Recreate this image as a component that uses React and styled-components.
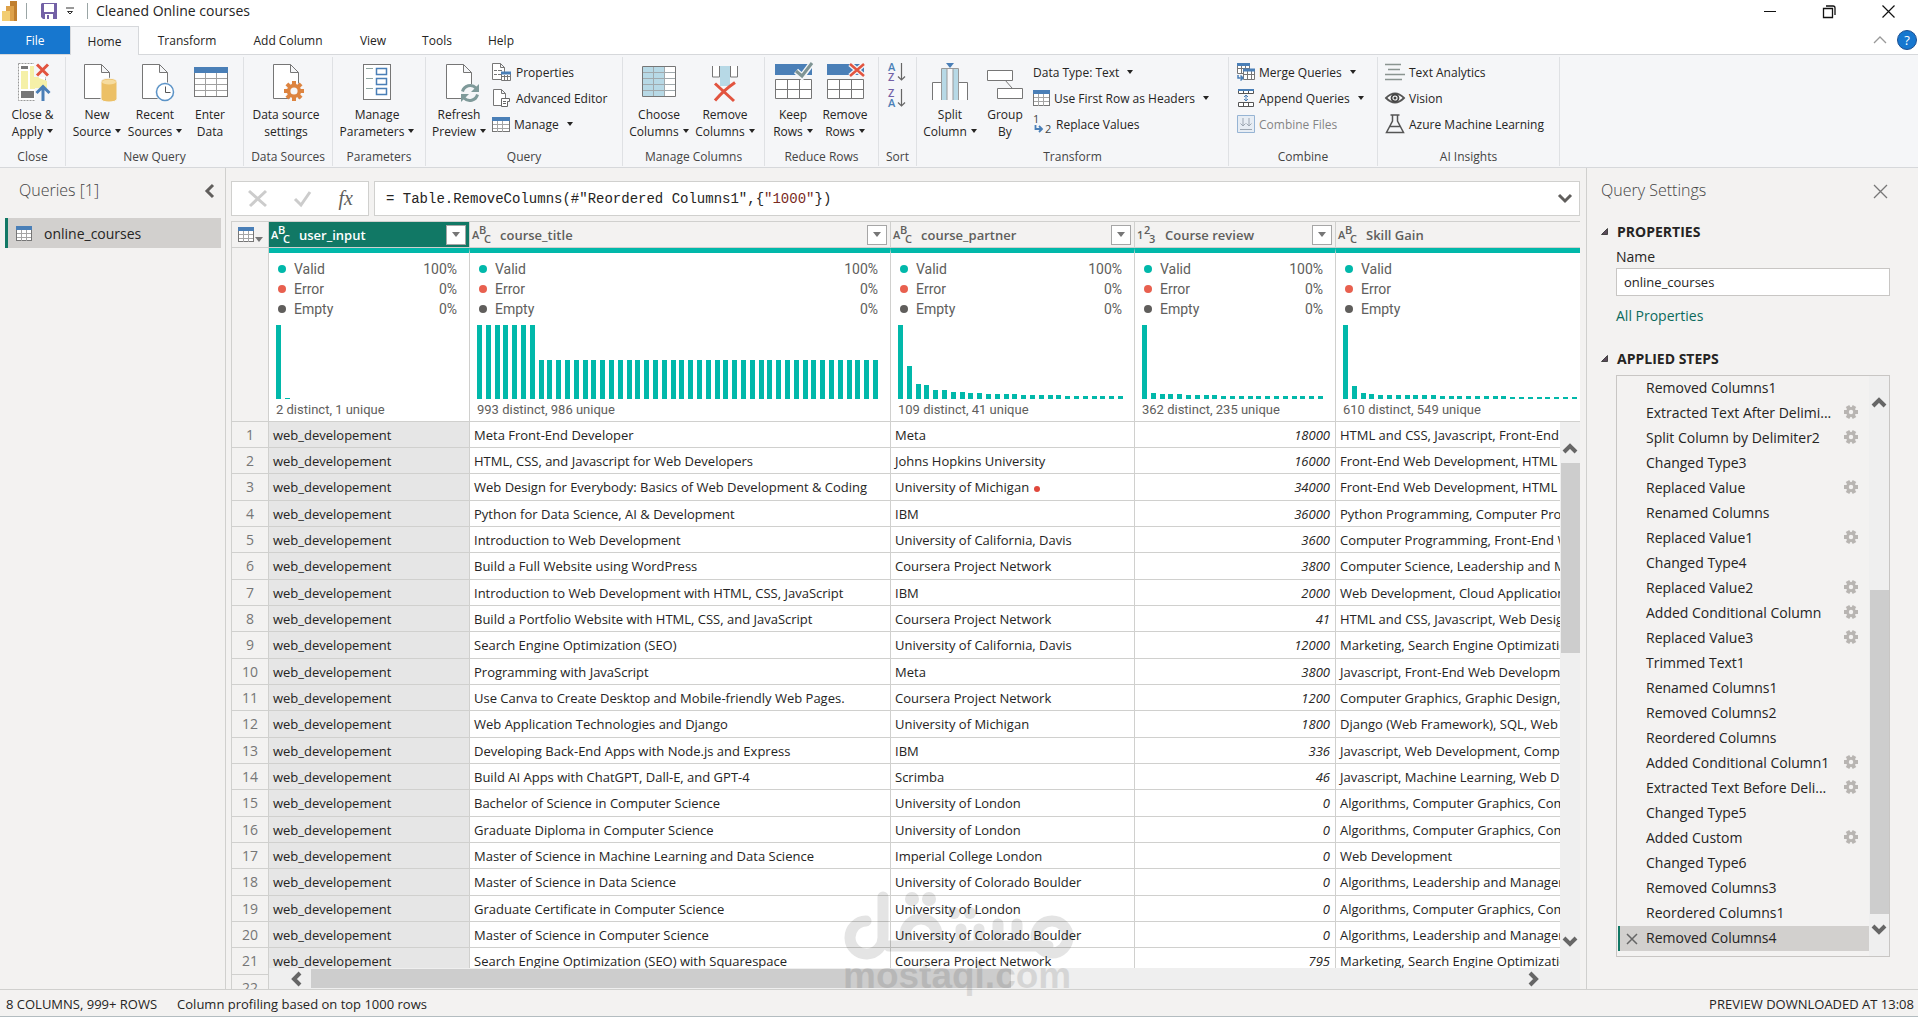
import React from "react"
import styled, { createGlobalStyle, css } from "styled-components"

const theme = {
    ui: `"Open Sans", "Noto Sans", sans-serif`,
    din: `Roboto, "Liberation Sans", sans-serif`,
    mono: `"Liberation Mono", monospace`,
    chrome: "#f3f2f1",
    ribbon: "#f5f6f8",
    line: "#d0d0ce",
    text: "#252423",
    muted: "#605e5c",
    green: "#117865",
    teal: "#01b8aa",
    blue: "#4a7fb7",
    grey: "#767676"
}

const GlobalStyle = createGlobalStyle`
    *{
        box-sizing: border-box;
    }
    body{
        margin: 0;
        background: ${theme.chrome};
        color: ${theme.text};
        font-family: ${theme.ui};
        font-size: 12px;
    }
    button, input{
        font: inherit;
        color: inherit;
    }
    button{
        border: 0;
        padding: 0;
        background: none;
    }
    svg{
        display: block;
        flex: none;
        overflow: visible;
    }
`

const Shell = styled.div`
    position: relative;
    display: flex;
    flex-direction: column;
    height: 100vh;
    overflow: hidden;
`

/* Title bar */

const TitleBar = styled.header`
    display: flex;
    align-items: center;
    height: 26px;
    padding: 0 23px 4px 2px;
    background: #fff;
`

const Divider = styled.span`
    width: 1px;
    height: 16px;
    margin: 0 8px;
    background: #9aa5a5;
`

const SaveButton = styled.button`
    margin: 0 9px 0 6px;
`

const CustomizeButton = styled.button`
    padding-right: 5px;
`

const DocTitle = styled.h1`
    flex: 1;
    margin: 0;
    font-size: 14px;
    font-weight: 400;
    line-height: 18px;
`

const WindowButtons = styled.div`
    display: flex;
    gap: 46px;
`

/* Ribbon tabs */

const TabRow = styled.nav`
    display: flex;
    height: 29px;
    padding-right: 1px;
    background: #fff;
    border-bottom: 1px solid #d6d8db;
`

const Tab = styled.button`
    width: ${props => props.$width}px;
    height: 28px;
    ${props => props.$kind === "file" && css`
        background: #1777cf;
        color: #fff;
    `}
    ${props => props.$kind === "active" && css`
        height: 29px;
        background: ${theme.ribbon};
        border: 1px solid #d6d8db;
        border-bottom: 0;
    `}
`

const TabTools = styled.div`
    display: flex;
    align-items: center;
    gap: 10px;
    margin-left: auto;
`

const Help = styled.button`
    width: 20px;
    height: 20px;
    border-radius: 50%;
    background: #1777cf;
    border: 1px solid #1d4f91;
    color: #fff;
    font-size: 13px;
    line-height: 18px;
`

/* Ribbon */

const Ribbon = styled.div`
    display: flex;
    height: 113px;
    padding: 2px 0 1px;
    background: ${theme.ribbon};
    border-bottom: 1px solid #d6d8db;
`

const Group = styled.section`
    display: flex;
    flex: none;
    flex-direction: column;
    justify-content: space-between;
    width: ${props => props.$width}px;
    padding-top: 5px;
    border-right: 1px solid #dfe1e4;
`

const GroupBody = styled.div`
    display: flex;
    padding-left: ${props => props.$inset || 0}px;
`

const GroupLabel = styled.span`
    line-height: 18px;
    text-align: center;
    color: #444;
`

const BigButton = styled.button`
    display: flex;
    flex-direction: column;
    align-items: center;
    width: ${props => props.$width}px;
    line-height: 17px;
    white-space: nowrap;
    svg:first-child{
        margin-bottom: 4px;
    }
`

const SmallStack = styled.div`
    display: flex;
    flex-direction: column;
    padding-left: ${props => props.$inset || 0}px;
`

const SmallButton = styled.button`
    display: flex;
    align-items: center;
    gap: 4px;
    height: 26px;
    padding-bottom: 6px;
    white-space: nowrap;
    opacity: ${props => props.disabled ? 0.55 : 1};
`

const SortStack = styled.div`
    display: flex;
    flex-direction: column;
    gap: 6px;
`

const CaretMark = styled.span`
    display: inline-block;
    margin-left: 4px;
    vertical-align: 3px;
    border: 3px solid transparent;
    border-top: 4px solid #252423;
    border-bottom: 0;
`

/* Panes */

const Workspace = styled.div`
    display: flex;
    flex: 1;
    min-height: 0;
`

const PaneHeader = styled.div`
    display: flex;
    align-items: center;
    justify-content: space-between;
    height: 46px;
`

const PaneTitle = styled.h2`
    margin: 0;
    padding-bottom: 2px;
    font-size: 16px;
    font-weight: 300;
    color: #444;
`

const QueriesPane = styled.aside`
    flex: none;
    width: 226px;
    border-right: 1px solid ${theme.line};
    ${PaneHeader}{
        padding: 0 10px 0 19px;
    }
`

const QueryItem = styled.button`
    display: flex;
    align-items: center;
    gap: 12px;
    width: 216px;
    height: 30px;
    margin: 4px 0 0 5px;
    padding-left: 8px;
    border-left: 3px solid ${theme.green};
    background: #d2d0ce;
    font-size: 14px;
`

const Main = styled.main`
    display: flex;
    flex: 1;
    flex-direction: column;
    min-width: 0;
    padding: 13px 6px 0 5px;
`

const FormulaBar = styled.div`
    display: flex;
    gap: 5px;
    height: 35px;
    margin-bottom: 5px;
`

const FormulaTools = styled.div`
    display: flex;
    align-items: center;
    justify-content: space-between;
    width: 138px;
    padding: 0 15px 0 16px;
    background: #fff;
    border: 1px solid ${theme.line};
`

const FxButton = styled.button`
    font-family: "Liberation Serif", serif;
    font-size: 20px;
    font-style: italic;
    color: ${theme.muted};
`

const FormulaBox = styled.div`
    display: flex;
    flex: 1;
    align-items: center;
    justify-content: space-between;
    padding: 0 7px 0 11px;
    background: #fff;
    border: 1px solid ${theme.line};
`

const FormulaText = styled.div`
    flex: 1;
    font-family: ${theme.mono};
    font-size: 14px;
    white-space: pre;
    outline: 0;
    em{
        font-style: normal;
        color: #7a2b1e;
    }
`

/* Data grid */

const GridArea = styled.div`
    position: relative;
    flex: 1;
    min-height: 0;
    overflow: hidden;
    border-top: 1px solid ${theme.line};
    border-left: 1px solid ${theme.line};
`

const Table = styled.table`
    width: 100%;
    table-layout: fixed;
    border-collapse: separate;
    border-spacing: 0;
    th, td{
        padding: 0;
        overflow: hidden;
        white-space: nowrap;
        text-align: left;
        font-weight: 400;
        border-right: 1px solid ${theme.line};
        border-bottom: 1px solid ${theme.line};
    }
    th:last-child, td:last-child{
        border-right: 0;
    }
`

const HeadCell = styled.th`
    height: 26px;
    color: ${props => props.$selected ? "#fff" : theme.muted};
    background: ${props => props.$selected ? theme.green : theme.chrome};
`

const HeadInner = styled.div`
    display: flex;
    align-items: center;
    gap: 8px;
    padding: 0 3px 0 2px;
    font-size: 13px;
    strong{
        flex: 1;
        font-weight: 600;
    }
`

const FilterButton = styled.button`
    display: grid;
    place-items: center;
    width: 20px;
    height: 20px;
    background: #fff;
    border: 1px solid #a6a6a6;
    color: ${theme.grey};
`

const CornerCell = styled.th`
    background: ${theme.chrome};
    button{
        display: flex;
        align-items: flex-end;
        gap: 1px;
        margin-left: 6px;
    }
`

const ProfileCell = styled.td`
    height: 174px;
    vertical-align: top;
    background: #fff;
    border-top: 5px solid ${theme.teal};
    font-family: ${theme.din};
    font-size: 13px;
    color: ${theme.muted};
`

const BlankCell = styled.td`
    background: ${theme.chrome};
`

const Quality = styled.ul`
    margin: 0;
    padding: 6px 12px 6px 9px;
    list-style: none;
    li{
        display: flex;
        align-items: center;
        gap: 8px;
        height: 20px;
        font-size: 14px;
    }
`

const Share = styled.span`
    margin-left: auto;
`

const Dot = styled.i`
    width: 8px;
    height: 8px;
    border-radius: 50%;
    background: ${props => props.$color};
`

const Distribution = styled.div`
    padding-left: 7px;
    line-height: 22px;
`

const Row = styled.tr`
    td, th{
        height: 26px;
        line-height: 18px;
    }
    &:nth-child(3n) td, &:nth-child(3n) th{
        height: 27px;
    }
`

const RowNumber = styled.th`
    background: ${theme.chrome};
    color: ${theme.grey};
    font-size: 14px;
    && {
        text-align: center;
    }
`

const Cell = styled.td`
    background: ${props => props.$selected ? "#e6e6e6" : "#fff"};
    font-size: 13px;
    && {
        padding: ${props => props.$number ? "0 5px 0 0" : "0 0 0 4px"};
        text-align: ${props => props.$number ? "right" : "left"};
        font-style: ${props => props.$number ? "italic" : "normal"};
    }
`

const RedDot = styled.span`
    display: inline-block;
    width: 6px;
    height: 6px;
    margin-left: 5px;
    border-radius: 50%;
    background: #e0483c;
`

/* Scroll bars lie over the last rows and the last column */

const VerticalBar = styled.div`
    position: absolute;
    top: 200px;
    right: 0;
    bottom: 21px;
    display: flex;
    flex-direction: column;
    align-items: center;
    width: 20px;
    padding: 21px 0;
    background: #efefef;
`

const VerticalThumb = styled.div`
    width: 19px;
    height: 190px;
    margin: 9px 0 auto;
    background: #cdcdcd;
`

const HorizontalBar = styled.div`
    position: absolute;
    left: 37px;
    right: 0;
    bottom: 0;
    display: flex;
    align-items: center;
    height: 21px;
    padding: 0 40px 0 21px;
    background: #efefef;
`

const HorizontalThumb = styled.div`
    width: 56%;
    height: 19px;
    margin: 0 auto 0 9px;
    background: #cdcdcd;
`

/* Query settings */

const Settings = styled.aside`
    flex: none;
    width: 332px;
    padding: 0 28px 0 14px;
    border-left: 1px solid ${theme.line};
    ${PaneHeader}{
        padding-right: 2px;
    }
`

const SectionTitle = styled.h3`
    display: flex;
    align-items: center;
    gap: 9px;
    height: 34px;
    margin: 0;
    font-size: 14px;
    font-weight: 700;
`

const SectionBody = styled.div`
    display: flex;
    flex-direction: column;
    margin-left: 15px;
    font-size: 14px;
`

const NameLabel = styled.label`
    line-height: 18px;
`

const NameInput = styled.input`
    height: 28px;
    margin: 2px 0 10px;
    padding: 0 7px;
    background: #fff;
    border: 1px solid #c8c6c4;
    font-size: 13px;
`

const PropertiesLink = styled.a`
    margin-bottom: 15px;
    line-height: 20px;
    color: #0b6a5c;
    text-decoration: none;
`

const StepsBox = styled.div`
    display: flex;
    height: 582px;
    border: 1px solid #c8c6c4;
`

const StepList = styled.ol`
    flex: 1;
    min-width: 0;
    margin: 0;
    padding: 0 0 0 1px;
    list-style: none;
`

const Step = styled.li`
    display: flex;
    align-items: center;
    height: 25px;
    padding: 0 11px 0 ${props => props.$selected ? 6 : 28}px;
    background: ${props => props.$selected ? "#d2d0ce" : "none"};
    border-left: ${props => props.$selected ? `2px solid ${theme.green}` : "0"};
`

const StepName = styled.button`
    line-height: 20px;
    padding-bottom: 2px;
    white-space: nowrap;
`

const StepDelete = styled.span`
    margin-right: 8px;
`

const StepGear = styled.button`
    margin-left: auto;
    padding-bottom: 4px;
`

const StepBar = styled.div`
    display: flex;
    flex-direction: column;
    align-items: center;
    width: 20px;
    padding: 21px 0;
    background: #efefef;
`

const StepThumb = styled.div`
    flex: 1;
    width: 19px;
    margin: 182px 0 10px;
    background: #cdcdcd;
`

const StatusBar = styled.footer`
    display: flex;
    gap: 20px;
    height: 28px;
    padding: 0 4px 0 6px;
    border-top: 1px solid ${theme.line};
    border-bottom: 1px solid #b3bcc0;
    font-size: 13px;
    line-height: 28px;
    span:last-child{
        margin-left: auto;
    }
`

const Watermark = styled.svg`
    position: absolute;
    left: 50%;
    bottom: 17px;
    margin-left: -116px;
    opacity: 0.1;
    pointer-events: none;
`

/* Icons */

const Big = ({ children }) =>
    <svg width="40" height="40" viewBox="0 0 40 40" fill="none" aria-hidden="true">{children}</svg>

const Small = ({ children, width = 18, height = 18 }) =>
    <svg width={width} height={height} viewBox={`0 0 ${width} ${height}`} fill="none" aria-hidden="true">{children}</svg>

const Page = () =>
    <path d="M7.5 2.5h17l8 8v26h-25zM24.5 2.5v8h8" fill="#fff" stroke={theme.grey} />

const Cross = ({ d, width = 3 }) =>
    <path d={d} stroke="#e2543f" strokeWidth={width} />

const GearShape = ({ cx, cy, r, color }) =>
    <g transform={`translate(${cx} ${cy})`} fill={color}>
        {[0, 45, 90, 135].map(a =>
            <rect key={a} x={-r / 5} y={-r} width={r / 2.5} height={r * 2} transform={`rotate(${a})`} />
        )}
        <circle r={r * 0.72} />
        <circle r={r * 0.36} fill="#f5f6f8" />
    </g>

/* Six broad teeth, for the step list */
const StepGearIcon = () =>
    <Small width={14} height={14}>
        <g transform="translate(7 7)" fill="#b8b5b2">
            {[30, 90, 150].map(a =>
                <rect key={a} x="-2" y="-7" width="4" height="14" transform={`rotate(${a})`} />
            )}
            <circle r="5" />
            <circle r="2.2" fill={theme.chrome} />
        </g>
    </Small>

const Chevron = ({ d, width = 14, height = 10, stroke = 3, color = "#666" }) =>
    <Small width={width} height={height}>
        <path d={d} stroke={color} strokeWidth={stroke} />
    </Small>

const UpMark = () => <Chevron d="M1 9l6-6 6 6" height={11} stroke={4} />
const DownMark = () => <Chevron d="M1 2l6 6 6-6" height={11} stroke={4} />

const SectionMark = () =>
    <Small width={7} height={7}>
        <path d="M6.5.5v6h-6z" fill="#5a4a5a" stroke="#444" />
    </Small>

const GridIcon = ({ width = 16, height = 15 }) =>
    <Small width={width} height={height}>
        <rect x="0.5" y="0.5" width={width - 1} height={height - 1} fill="#fff" stroke={theme.grey} />
        <path d={`M5.5 4v${height - 4}M10.5 4v${height - 4}M1 7.5h${width - 2}M1 11.5h${width - 2}`} stroke="#a5a5a5" />
        <path d={`M0 2h${width}`} stroke={theme.blue} strokeWidth="4" />
    </Small>

const CloseApplyIcon = () =>
    <Big>
        <rect x="5.5" y="1.5" width="27" height="37" fill="#fff" stroke="#999" strokeDasharray="2 1" />
        <path d="M8 5.5h7" stroke="#777" strokeWidth="3" />
        <rect x="8" y="29" width="13" height="7" fill="#777" />
        <rect x="8" y="9" width="7" height="18" fill="#f5f0a8" />
        <path d="M17 4h5l4 12 8 3v8H17z" fill="#f5f0a8" />
        <path d="M21 1h17v14H21z" fill="#f5f6f8" />
        <Cross d="M24 2.5l11 11M35 2.5l-11 11" />
        <path d="M22 26h15v13H22z" fill="#f5f6f8" />
        <path d="M30 39V25M23.5 31l6.5-6.5 6.5 6.5" stroke={theme.blue} strokeWidth="3" />
    </Big>

const NewSourceIcon = () =>
    <Big>
        <Page />
        <path d="M24 20c0-5 16-5 16 0v17c0 4-16 4-16 0z" fill="#ecc066" stroke="#f5f6f8" />
        <ellipse cx="32" cy="20" rx="7" ry="2.5" fill="#f6dc9f" />
    </Big>

const RecentIcon = () =>
    <Big>
        <Page />
        <circle cx="30" cy="30" r="10" fill="#f5f6f8" />
        <circle cx="30" cy="30" r="8.5" fill="#fff" stroke="#5b93c7" strokeWidth="1.5" />
        <path d="M30.500 24.500v6h5" stroke="#555" />
    </Big>

const EnterDataIcon = () =>
    <Big>
        <rect x="4.5" y="5.5" width="33" height="29" fill="#fff" stroke={theme.grey} />
        <path d="M15.5 11v23M26.5 11v23M5 16.5h32M5 22.5h32M5 28.5h32" stroke="#a0a0a0" />
        <path d="M4 8h34" stroke={theme.blue} strokeWidth="6" />
    </Big>

const DataSourceIcon = () =>
    <Big>
        <Page />
        <circle cx="28" cy="29" r="9" fill="#f5f6f8" />
        <GearShape cx={28} cy={29} r={10} color="#dd8440" />
    </Big>

const ParametersIcon = () =>
    <Big>
        <rect x="6.5" y="2.5" width="27" height="35" fill="#fff" stroke={theme.grey} />
        <path d="M9 6.5h7M9 16.5h7M9 26.5h7" stroke="#8fa5a0" />
        <path d="M19.5 6.5h10v6h-10zM19.5 16.5h10v6h-10zM19.5 26.5h10v6h-10z" stroke={theme.blue} strokeWidth="1.5" />
    </Big>

const RefreshIcon = () =>
    <Big>
        <Page />
        <circle cx="31" cy="31" r="9" fill="#f5f6f8" />
        <path d="M23.5 29.5a8 8 0 0 1 13.5-3.5M38.5 32.5a8 8 0 0 1-13.5 3.5" stroke="#7f9a9a" strokeWidth="3" />
        <path d="M40 22v8h-8zM22 40v-8h8z" fill="#7f9a9a" />
    </Big>

const ChooseColumnsIcon = () =>
    <Big>
        <path d="M3.5 4.5h33v30h-33z" fill="#fff" />
        <path d="M4 5h22v29H4z" fill="#b7d9e6" />
        <path d="M14.5 5v29M25.5 5v29M4 10.5h32M4 16.5h32M4 22.5h32M4 28.5h32" stroke="#a0a9ad" />
        <path d="M3.5 4.5h33v30h-33z" stroke={theme.grey} />
    </Big>

const RemoveColumnsIcon = () =>
    <Big>
        <path d="M7.5 4v11h7V4M25.5 4v11h7V4" fill="#fff" stroke={theme.grey} />
        <path d="M15 4h10v20H15z" fill="#b7d9e6" />
        <Cross d="M10 21.5L29 39M30 20.5Q19 28 10 38.5" />
    </Big>

const RowsBase = () =>
    <>
        <path d="M2 2h37v11H2z" fill={theme.blue} />
        <path d="M2.5 17.5h36v19h-36zM14.5 17v19M26.5 17v19M3 27.5h35" fill="#fff" stroke={theme.grey} />
    </>

const KeepRowsIcon = () =>
    <Big>
        <RowsBase />
        <path d="M23 9l6 5.5L39 1" stroke="#f5f6f8" strokeWidth="6" />
        <path d="M23 9l6 5L39 1" stroke="#7f9494" strokeWidth="3" />
    </Big>

const RemoveRowsIcon = () =>
    <Big>
        <RowsBase />
        <path d="M25 2l14 12M39 2L25 14" stroke="#f5f6f8" strokeWidth="5" />
        <Cross d="M25 2l14 12M39 2L25 14" width={2.5} />
    </Big>

const SplitIcon = () =>
    <Big>
        <path d="M2.5 38V20.5h9V38M28.5 38V20.5h9V38" fill="#fff" stroke={theme.grey} />
        <path d="M12 7h5v31h-5zM23 7h5v31h-5z" fill="#b7d9e6" />
        <path d="M11.5 38V6.5h5.5M28.5 38V6.5H23M17 38V6.5h6V38" stroke="#999" />
        <path d="M16 1h8l-4 5z" fill={theme.blue} />
    </Big>

const GroupByIcon = () =>
    <Big>
        <path d="M20 18l7 8" stroke={theme.grey} />
        <path d="M2.5 8.5h25v10h-25zM12.5 26.5h25v10h-25z" fill="#fff" stroke={theme.grey} />
    </Big>

const PropertiesIcon = () =>
    <Small width={20}>
        <path d="M.5.5h8l4 4v12H.5zM8.5.5v4h4" fill="#fff" stroke={theme.grey} />
        <path d="M2 7.5h3M2 11.5h3M6 7.5h4M6 11.5h4" stroke={theme.grey} />
        <path d="M9.5 9.5h9v8h-9zM9 13.5h10M12.5 12v5M15.5 12v5" fill="#fff" stroke={theme.grey} />
        <path d="M9 10h10" stroke={theme.blue} strokeWidth="3" />
    </Small>

const EditorIcon = () =>
    <Small width={20}>
        <path d="M1.5.5h8l4 4v12h-12zM9.5.5v4h4" fill="#fff" stroke={theme.grey} />
        <path d="M9.5 9.5h8v3h-2v5h-6z" fill="#fff" stroke="#666" />
        <path d="M11 12.5h3M11 14.5h3" stroke="#666" />
    </Small>

const SortIcon = ({ top, bottom, topColor, bottomColor }) =>
    <svg width="19" height="20" viewBox="0 0 19 20" fill="none" fontFamily="Open Sans" fontSize="11" fontWeight="600">
        <text x="0" y="9" fill={topColor}>{top}</text>
        <text x="0" y="19" fill={bottomColor}>{bottom}</text>
        <path d="M13.5 1v17M10 14.5l3.5 3.5 3.5-3.5" stroke="#666" strokeWidth="1.2" />
    </svg>

const ReplaceIcon = () =>
    <svg width="19" height="20" viewBox="0 0 19 20" fill="none" fontFamily="Open Sans" fontSize="11">
        <text x="0" y="9" fill="#444">1</text>
        <text x="12" y="19" fill="#444">2</text>
        <path d="M2.5 11v4h6M6 12l3 3-3 3" stroke={theme.blue} strokeWidth="1.8" />
    </svg>

const MergeIcon = () =>
    <Small>
        <path d="M.5.5h12v10H.5zM.5 5.5h12M4.5 2v8M8.5 2v8" fill="#fff" stroke={theme.grey} />
        <path d="M0 1.5h13" stroke={theme.blue} strokeWidth="3" />
        <path d="M6.5 6.5h11v10h-11zM7 11.5h11M10.5 8v8M14.5 8v8" fill="#fff" stroke={theme.grey} />
        <path d="M6 7h12" stroke={theme.blue} strokeWidth="3" />
        <path d="M1 12v3h4M3.5 12.5L6 15l-2.5 2.5" stroke={theme.blue} strokeWidth="1.5" />
    </Small>

const AppendIcon = () =>
    <Small>
        <path d="M1.5.5h15v4h-15zM6.5 1v4M11.5 1v4M1.5 13.5h15v4h-15zM6.5 13v4M11.5 13v4" fill="#fff" stroke="#555" />
        <path d="M1 1h16" stroke={theme.blue} strokeWidth="2" />
        <path d="M9 6v6M7 8l2-2 2 2M7 10l2 2 2-2" stroke={theme.blue} />
    </Small>

const CombineIcon = () =>
    <Small>
        <path d="M.5.5h17v17H.5z" fill="#dde7f1" stroke={theme.blue} />
        <path d="M6 3v8M3.5 8.5L6 11l2.5-2.5M12 3v8M9.5 8.5L12 11l2.5-2.5M3 14.5h12" stroke="#56677a" />
    </Small>

const TextAnalyticsIcon = () =>
    <Small width={20}>
        <path d="M0 1.5h16M3 6.5h12M0 11.5h20M0 16.5h17" stroke="#8a9490" strokeWidth="1.5" />
    </Small>

const VisionIcon = () =>
    <Small width={20}>
        <path d="M1 9q9-9 18 0q-9 9-18 0z" fill="#fff" stroke="#555" strokeWidth="1.8" />
        <circle cx="10" cy="9" r="3.5" stroke="#444" strokeWidth="1.8" />
        <circle cx="10" cy="9" r="1.5" fill="#444" />
    </Small>

const FlaskIcon = () =>
    <Small width={20} height={20}>
        <path d="M7.5 1v6L1.5 18.5h17L12.5 7V1M5.5 1h9M5 12.5h10" stroke="#555" strokeWidth="1.5" />
    </Small>

const PowerBiLogo = () =>
    <Small width={16} height={20}>
        <path d="M8 0h7v20H8z" fill="#c07f2f" />
        <path d="M4 5h8v15H4z" fill="#dda14a" />
        <path d="M0 10h8v10H0z" fill="#f2cd72" />
    </Small>

const SaveIcon = () =>
    <Small width={16} height={16}>
        <path d="M1 0h15v16H2l-2-2V1z" fill="#7361a6" />
        <path d="M3 1h10v8H3zM4 11h8v5H4z" fill="#fff" />
        <path d="M6 12h2v4H6z" fill="#7361a6" />
    </Small>

const TypeIcon = ({ marks }) =>
    <svg width="20" height="18" viewBox="0 0 20 18" fill="currentColor" fontFamily="Open Sans" fontSize="11" fontWeight="600">
        <text x="0" y="13">{marks[0]}</text>
        <text x="7" y="8">{marks[1]}</text>
        <text x="12" y="17">{marks[2]}</text>
    </svg>

const Triangle = () =>
    <svg width="8" height="5" viewBox="0 0 8 5"><path d="M0 0h8L4 5z" fill="#767676" /></svg>

const Wordmark = () =>
    <Watermark width="232" height="110" viewBox="0 0 232 110">
        <g fill="none" stroke="#000" strokeWidth="11" strokeLinecap="round">
            <path d="M23 31A16.5 16.5 0 1 0 40 47V7M46 56H205" />
            <path d="M62 54V45a16 16 0 0 1 32 0v9M118 39v16M136 39v16M155 34v21M174 34v21" />
            <circle cx="209" cy="47" r="16" />
        </g>
        <circle cx="69" cy="9" r="7" />
        <circle cx="86" cy="9" r="7" />
        <circle cx="111" cy="23" r="6" />
        <circle cx="127" cy="23" r="6" />
        <text x="0" y="98" fontFamily="Liberation Sans" fontWeight="700" fontSize="37">mostaql.com</text>
    </Watermark>

/* Data */

const fill = (count, value) => Array(count).fill(value)

const columns = [
    {
        name: "user_input", marks: "ABC", width: 201, selected: true,
        bars: [74, 1], summary: "2 distinct, 1 unique"
    },
    {
        name: "course_title", marks: "ABC", width: 421,
        bars: [...fill(7, 74), ...fill(39, 39)], summary: "993 distinct, 986 unique"
    },
    {
        name: "course_partner", marks: "ABC", width: 244,
        bars: [74, 33, 15, 14, 9, 9, 7, 7, 6, 6, ...fill(4, 5), ...fill(5, 4), ...fill(7, 3)],
        summary: "109 distinct, 41 unique"
    },
    {
        name: "Course review", marks: "123", width: 201,
        bars: [74, 6, 5, 5, 5, ...fill(4, 4), ...fill(12, 3)], summary: "362 distinct, 235 unique"
    },
    {
        name: "Skill Gain", marks: "ABC", open: true,
        bars: [74, 13, 6, 5, ...fill(7, 4), ...fill(8, 3), ...fill(8, 2)], summary: "610 distinct, 549 unique"
    }
]

const courses = [
    ["Meta Front-End Developer", "Meta", "18000", "HTML and CSS, Javascript, Front-End Web Development"],
    ["HTML, CSS, and Javascript for Web Developers", "Johns Hopkins University", "16000", "Front-End Web Development, HTML and CSS"],
    ["Web Design for Everybody: Basics of Web Development & Coding", "University of Michigan", "34000", "Front-End Web Development, HTML and CSS"],
    ["Python for Data Science, AI & Development", "IBM", "36000", "Python Programming, Computer Programming"],
    ["Introduction to Web Development", "University of California, Davis", "3600", "Computer Programming, Front-End Web"],
    ["Build a Full Website using WordPress", "Coursera Project Network", "3800", "Computer Science, Leadership and Management"],
    ["Introduction to Web Development with HTML, CSS, JavaScript", "IBM", "2000", "Web Development, Cloud Applications"],
    ["Build a Portfolio Website with HTML, CSS, and JavaScript", "Coursera Project Network", "41", "HTML and CSS, Javascript, Web Design"],
    ["Search Engine Optimization (SEO)", "University of California, Davis", "12000", "Marketing, Search Engine Optimization"],
    ["Programming with JavaScript", "Meta", "3800", "Javascript, Front-End Web Development"],
    ["Use Canva to Create Desktop and Mobile-friendly Web Pages.", "Coursera Project Network", "1200", "Computer Graphics, Graphic Design, Web"],
    ["Web Application Technologies and Django", "University of Michigan", "1800", "Django (Web Framework), SQL, Web Development"],
    ["Developing Back-End Apps with Node.js and Express", "IBM", "336", "Javascript, Web Development, Computer"],
    ["Build AI Apps with ChatGPT, Dall-E, and GPT-4", "Scrimba", "46", "Javascript, Machine Learning, Web Development"],
    ["Bachelor of Science in Computer Science", "University of London", "0", "Algorithms, Computer Graphics, Computer"],
    ["Graduate Diploma in Computer Science", "University of London", "0", "Algorithms, Computer Graphics, Computer"],
    ["Master of Science in Machine Learning and Data Science", "Imperial College London", "0", "Web Development"],
    ["Master of Science in Data Science", "University of Colorado Boulder", "0", "Algorithms, Leadership and Management"],
    ["Graduate Certificate in Computer Science", "University of London", "0", "Algorithms, Computer Graphics, Computer"],
    ["Master of Science in Computer Science", "University of Colorado Boulder", "0", "Algorithms, Leadership and Management"],
    ["Search Engine Optimization (SEO) with Squarespace", "Coursera Project Network", "795", "Marketing, Search Engine Optimization"],
    ["", "", "", ""]
]

const steps = [
    ["Removed Columns1"],
    ["Extracted Text After Delimi...", true],
    ["Split Column by Delimiter2", true],
    ["Changed Type3"],
    ["Replaced Value", true],
    ["Renamed Columns"],
    ["Replaced Value1", true],
    ["Changed Type4"],
    ["Replaced Value2", true],
    ["Added Conditional Column", true],
    ["Replaced Value3", true],
    ["Trimmed Text1"],
    ["Renamed Columns1"],
    ["Removed Columns2"],
    ["Reordered Columns"],
    ["Added Conditional Column1", true],
    ["Extracted Text Before Deli...", true],
    ["Changed Type5"],
    ["Added Custom", true],
    ["Changed Type6"],
    ["Removed Columns3"],
    ["Reordered Columns1"],
    ["Removed Columns4"]
]

const tabs = [
    ["File", 70, "file"],
    ["Home", 69, "active"],
    ["Transform", 96],
    ["Add Column", 106],
    ["View", 64],
    ["Tools", 64],
    ["Help", 64]
]

/* Parts */

const Command = ({ icon, lines, width, menu }) =>
    <BigButton $width={width}>
        {icon}
        <span>{lines[0]}</span>
        <span>{lines[1]}{menu && <CaretMark />}</span>
    </BigButton>

const RibbonGroup = ({ label, width, inset, children }) =>
    <Group $width={width}>
        <GroupBody $inset={inset}>{children}</GroupBody>
        <GroupLabel>{label}</GroupLabel>
    </Group>

const BarChart = ({ bars }) =>
    <svg width={bars.length * 9} height="74" shapeRendering="crispEdges" fill={theme.teal}>
        {bars.map((h, i) =>
            <rect key={i} x={Math.round(i * 8.8)} y={74 - h} width="5" height={h} />
        )}
    </svg>

const Profile = ({ column }) =>
    <ProfileCell>
        <Quality>
            {[["Valid", "100%", theme.teal], ["Error", "0%", "#e8604f"], ["Empty", "0%", "#605e5c"]].map(([label, value, color]) =>
                <li key={label}>
                    <Dot $color={color} />
                    <span>{label}</span>
                    {!column.open && <Share>{value}</Share>}
                </li>
            )}
        </Quality>
        <Distribution>
            <BarChart bars={column.bars} />
            {column.summary}
        </Distribution>
    </ProfileCell>

const DataGrid = () =>
    <GridArea>
        <Table>
            <colgroup>
                <col width="37" />
                {columns.map(c => <col key={c.name} width={c.width} />)}
            </colgroup>
            <thead>
                <tr>
                    <CornerCell>
                        <button aria-label="Table options"><GridIcon /><Triangle /></button>
                    </CornerCell>
                    {columns.map(c =>
                        <HeadCell key={c.name} $selected={c.selected}>
                            <HeadInner>
                                <TypeIcon marks={c.marks} />
                                <strong>{c.name}</strong>
                                {!c.open && <FilterButton aria-label={`Filter ${c.name}`}><Triangle /></FilterButton>}
                            </HeadInner>
                        </HeadCell>
                    )}
                </tr>
                <tr>
                    <BlankCell />
                    {columns.map(c => <Profile key={c.name} column={c} />)}
                </tr>
            </thead>
            <tbody>
                {courses.map(([title, partner, review, skill], i) =>
                    <Row key={i}>
                        <RowNumber>{i + 1}</RowNumber>
                        <Cell $selected>{title && "web_developement"}</Cell>
                        <Cell>{title}</Cell>
                        <Cell>{partner}{i === 2 && <RedDot />}</Cell>
                        <Cell $number>{review}</Cell>
                        <Cell>{skill}</Cell>
                    </Row>
                )}
            </tbody>
        </Table>
        <VerticalBar>
            <UpMark />
            <VerticalThumb />
            <DownMark />
        </VerticalBar>
        <HorizontalBar>
            <Chevron d="M10 1L4 7l6 6" width={12} height={14} stroke={4} />
            <HorizontalThumb />
            <Chevron d="M2 1l6 6-6 6" width={12} height={14} stroke={4} />
        </HorizontalBar>
    </GridArea>

const RibbonBar = () =>
    <Ribbon>
        <RibbonGroup label="Close" width={66}>
            <Command icon={<CloseApplyIcon />} lines={["Close &", "Apply"]} width={65} menu />
        </RibbonGroup>
        <RibbonGroup label="New Query" width={178}>
            <Command icon={<NewSourceIcon />} lines={["New", "Source"]} width={62} menu />
            <Command icon={<RecentIcon />} lines={["Recent", "Sources"]} width={54} menu />
            <Command icon={<EnterDataIcon />} lines={["Enter", "Data"]} width={56} />
        </RibbonGroup>
        <RibbonGroup label="Data Sources" width={89}>
            <Command icon={<DataSourceIcon />} lines={["Data source", "settings"]} width={84} />
        </RibbonGroup>
        <RibbonGroup label="Parameters" width={93}>
            <Command icon={<ParametersIcon />} lines={["Manage", "Parameters"]} width={88} menu />
        </RibbonGroup>
        <RibbonGroup label="Query" width={197}>
            <Command icon={<RefreshIcon />} lines={["Refresh", "Preview"]} width={66} menu />
            <SmallStack>
                <SmallButton><PropertiesIcon />Properties</SmallButton>
                <SmallButton><EditorIcon />Advanced Editor</SmallButton>
                <SmallButton><GridIcon width={18} />Manage<CaretMark /></SmallButton>
            </SmallStack>
        </RibbonGroup>
        <RibbonGroup label="Manage Columns" width={142}>
            <Command icon={<ChooseColumnsIcon />} lines={["Choose", "Columns"]} width={72} menu />
            <Command icon={<RemoveColumnsIcon />} lines={["Remove", "Columns"]} width={60} menu />
        </RibbonGroup>
        <RibbonGroup label="Reduce Rows" width={114}>
            <Command icon={<KeepRowsIcon />} lines={["Keep", "Rows"]} width={56} menu />
            <Command icon={<RemoveRowsIcon />} lines={["Remove", "Rows"]} width={48} menu />
        </RibbonGroup>
        <RibbonGroup label="Sort" width={38} inset={9}>
            <SortStack>
                <button aria-label="Sort ascending"><SortIcon top="A" bottom="Z" topColor={theme.blue} bottomColor="#7361a6" /></button>
                <button aria-label="Sort descending"><SortIcon top="Z" bottom="A" topColor="#7361a6" bottomColor={theme.blue} /></button>
            </SortStack>
        </RibbonGroup>
        <RibbonGroup label="Transform" width={312}>
            <Command icon={<SplitIcon />} lines={["Split", "Column"]} width={66} menu />
            <Command icon={<GroupByIcon />} lines={["Group", "By"]} width={44} />
            <SmallStack $inset={6}>
                <SmallButton>Data Type: Text<CaretMark /></SmallButton>
                <SmallButton><GridIcon width={17} height={16} />Use First Row as Headers<CaretMark /></SmallButton>
                <SmallButton><ReplaceIcon />Replace Values</SmallButton>
            </SmallStack>
        </RibbonGroup>
        <RibbonGroup label="Combine" width={149} inset={8}>
            <SmallStack>
                <SmallButton><MergeIcon />Merge Queries<CaretMark /></SmallButton>
                <SmallButton><AppendIcon />Append Queries<CaretMark /></SmallButton>
                <SmallButton disabled><CombineIcon />Combine Files</SmallButton>
            </SmallStack>
        </RibbonGroup>
        <RibbonGroup label="AI Insights" width={182} inset={7}>
            <SmallStack>
                <SmallButton><TextAnalyticsIcon />Text Analytics</SmallButton>
                <SmallButton><VisionIcon />Vision</SmallButton>
                <SmallButton><FlaskIcon />Azure Machine Learning</SmallButton>
            </SmallStack>
        </RibbonGroup>
    </Ribbon>

const QuerySettings = () =>
    <Settings>
        <PaneHeader>
            <PaneTitle>Query Settings</PaneTitle>
            <button aria-label="Close settings">
                <Chevron d="M1 1l13 13M14 1L1 14" width={15} height={15} stroke={1.3} color="#777" />
            </button>
        </PaneHeader>
        <SectionTitle><SectionMark />PROPERTIES</SectionTitle>
        <SectionBody>
            <NameLabel htmlFor="query-name">Name</NameLabel>
            <NameInput id="query-name" defaultValue="online_courses" />
            <PropertiesLink href="#properties">All Properties</PropertiesLink>
        </SectionBody>
        <SectionTitle><SectionMark />APPLIED STEPS</SectionTitle>
        <SectionBody>
            <StepsBox>
                <StepList>
                    {steps.map(([name, gear], i) => {
                        const selected = i === steps.length - 1
                        return (
                            <Step key={name} $selected={selected}>
                                {selected && <StepDelete>
                                    <Chevron d="M1 1l10 10M11 1L1 11" width={12} height={12} stroke={1.5} />
                                </StepDelete>}
                                <StepName>{name}</StepName>
                                {gear && <StepGear aria-label={`Edit ${name}`}><StepGearIcon /></StepGear>}
                            </Step>
                        )
                    })}
                </StepList>
                <StepBar>
                    <UpMark />
                    <StepThumb />
                    <DownMark />
                </StepBar>
            </StepsBox>
        </SectionBody>
    </Settings>

const App = () =>
    <Shell>
        <GlobalStyle />
        <TitleBar>
            <PowerBiLogo />
            <Divider />
            <SaveButton aria-label="Save"><SaveIcon /></SaveButton>
            <CustomizeButton aria-label="Customize toolbar">
                <Chevron d="M0 1h8M1.5 4.5h5L4 7z" width={8} height={8} stroke={1} color="#333" />
            </CustomizeButton>
            <Divider />
            <DocTitle>Cleaned Online courses</DocTitle>
            <WindowButtons>
                <button aria-label="Minimize"><Chevron d="M0 6.5h12" width={13} height={13} stroke={1} color="#111" /></button>
                <button aria-label="Restore">
                    <Chevron d="M.5 3.5h9v9h-9zM3 1h7q2 0 2 2v7" width={13} height={13} stroke={1.3} color="#111" />
                </button>
                <button aria-label="Close"><Chevron d="M.5.5l12 12M12.5.5l-12 12" width={13} height={13} stroke={1.2} color="#111" /></button>
            </WindowButtons>
        </TitleBar>
        <TabRow>
            {tabs.map(([label, width, kind]) =>
                <Tab key={label} $width={width} $kind={kind}>{label}</Tab>
            )}
            <TabTools>
                <Chevron d="M1 7l6-6 6 6" height={8} stroke={1.3} color="#999" />
                <Help>?</Help>
            </TabTools>
        </TabRow>
        <RibbonBar />
        <Workspace>
            <QueriesPane>
                <PaneHeader>
                    <PaneTitle>Queries [1]</PaneTitle>
                    <button aria-label="Collapse"><Chevron d="M8 1L2 7l6 6" width={10} height={14} color="#605e5c" /></button>
                </PaneHeader>
                <QueryItem><GridIcon />online_courses</QueryItem>
            </QueriesPane>
            <Main>
                <FormulaBar>
                    <FormulaTools>
                        <button aria-label="Cancel"><Chevron d="M1 1l17 15M18 1L2 16" width={20} height={17} color="#ccc" /></button>
                        <button aria-label="Accept"><Chevron d="M1 8l6 6L16 1" width={18} height={16} color="#ccc" /></button>
                        <FxButton>fx</FxButton>
                    </FormulaTools>
                    <FormulaBox>
                        <FormulaText role="textbox" aria-label="Formula" contentEditable suppressContentEditableWarning>
                            {`= Table.RemoveColumns(#"Reordered Columns1",{`}<em>"1000"</em>{"})"}
                        </FormulaText>
                        <button aria-label="Expand formula"><Chevron d="M1 1l6 6 6-6" color="#605e5c" /></button>
                    </FormulaBox>
                </FormulaBar>
                <DataGrid />
            </Main>
            <QuerySettings />
        </Workspace>
        <StatusBar>
            <span>8 COLUMNS, 999+ ROWS</span>
            <span>Column profiling based on top 1000 rows</span>
            <span>PREVIEW DOWNLOADED AT 13:08</span>
        </StatusBar>
        <Wordmark />
    </Shell>

export default App
